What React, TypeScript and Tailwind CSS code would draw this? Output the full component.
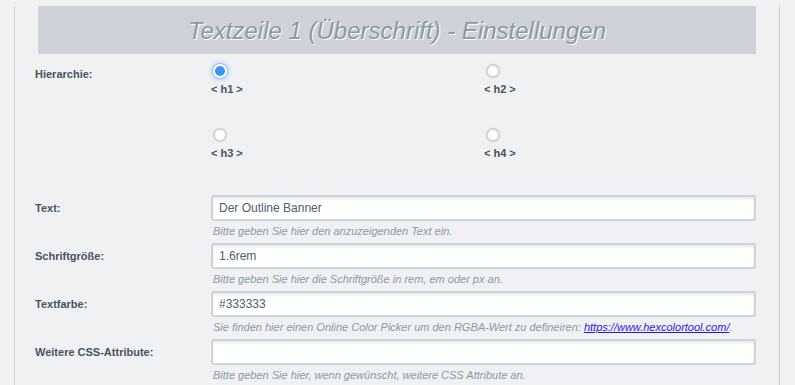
import type { ReactNode } from "react"

const font = "font-['Liberation_Sans',Arial,sans-serif]"

function Radio({ checked, label }: { checked?: boolean; label: string }) {
  return (
    <div className="flex flex-col items-start">
      <div className="pl-[2px]">
        {checked ? (
          <div className="w-[14px] h-[14px] rounded-full bg-[#3a95ee] border-[2px] border-white shadow-[0_0_0_1px_#9cc8f2,0_0_4px_2px_#a9d0f5]" />
        ) : (
          <div className="w-[14px] h-[14px] rounded-full bg-white border-[2px] border-[#d4d8dd] shadow-[0_0_1px_#b9bec5]" />
        )}
      </div>
      <span className="mt-[4px] text-[11px] leading-[14px] font-bold text-[#46545f]">{label}</span>
    </div>
  )
}

function Field({ label, value, hint }: { label: string; value: string; hint: ReactNode }) {
  return (
    <div className="flex mb-[5px]">
      <div className="w-[176px] h-[26px] flex items-center text-[11px] font-bold text-[#46545f]">{label}</div>
      <div className="flex-1">
        <div className="h-[26px] border-[2px] border-[#cfd4da] rounded-[3px] bg-white shadow-[inset_0_2px_3px_rgba(0,0,0,0.1)] flex items-center pl-[6px] text-[12px] text-[#4a6275]">
          {value}
        </div>
        <div className="mt-[3px] h-[14px] leading-[14px] pl-[2px] text-[11px] italic text-[#8d99a3]">{hint}</div>
      </div>
    </div>
  )
}

export default function App() {
  return (
    <div className={`w-[795px] h-[385px] bg-[#f0f1f3] overflow-hidden ${font}`}>
      <div className="ml-[14px] w-[766px] h-full border-l border-l-[#cdd2de] border-r border-r-[#d0d0d4]">
        {/* ── Heading bar ───────────────────────── */}
        <div className="mx-[23px] mt-[6px] h-[48px] pt-[2px] bg-[#cfd3d9] flex items-center justify-center">
          <h2 className="text-[24px] italic text-[#8a99a5] [text-shadow:1px_1px_0_#ffffff] leading-none">
            Textzeile 1 (Überschrift) - Einstellungen
          </h2>
        </div>

        {/* ── Hierarchie ─────────────────────────── */}
        <div className="flex pl-[20px] mt-[10px]">
          <div className="w-[176px] pt-[3px] text-[11px] leading-[14px] font-bold text-[#46545f]">Hierarchie:</div>
          <div className="grid grid-cols-[273px_273px] gap-y-[32px]">
            <Radio checked label="< h1 >" />
            <Radio label="< h2 >" />
            <Radio label="< h3 >" />
            <Radio label="< h4 >" />
          </div>
        </div>

        {/* ── Fields ─────────────────────────────── */}
        <div className="pl-[20px] pr-[23px] mt-[35px]">
          <Field label="Text:" value="Der Outline Banner" hint="Bitte geben Sie hier den anzuzeigenden Text ein." />
          <Field
            label="Schriftgröße:"
            value="1.6rem"
            hint="Bitte geben Sie hier die Schriftgröße in rem, em oder px an."
          />
          <Field
            label="Textfarbe:"
            value="#333333"
            hint={
              <>
                Sie finden hier einen Online Color Picker um den RGBA-Wert zu defineiren:{" "}
                <a href="#" className="text-[#2417f0] underline">https://www.hexcolortool.com/</a>.
              </>
            }
          />
          <Field label="Weitere CSS-Attribute:" value="" hint="Bitte geben Sie hier, wenn gewünscht, weitere CSS Attribute an." />
        </div>
      </div>
    </div>
  )
}
